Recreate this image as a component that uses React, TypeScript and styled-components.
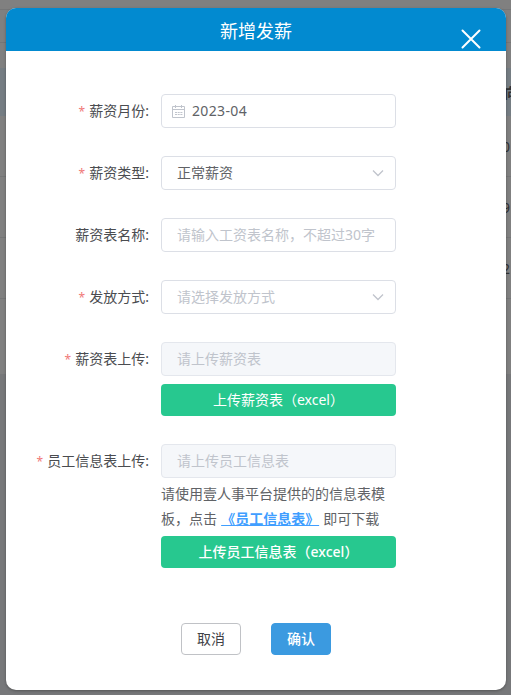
import React from 'react';
import styled, { createGlobalStyle, css } from 'styled-components';

const GlobalStyle = createGlobalStyle`
  * { box-sizing: border-box; }
  html, body { margin: 0; padding: 0; overflow: hidden; }
  body, button, input {
    font-family: "Noto Sans", "Noto Sans CJK SC", sans-serif;
    font-size: 14px;
  }
`;

const Page = styled.div`
  position: relative;
  width: 511px;
  height: 695px;
  overflow: hidden;
  background: #808080;
`;

const Backdrop = styled.div`
  display: flex;
  flex-direction: column;
  height: 100%;
`;

const BackRow = styled.div<{ $h: number; $tone?: string; $line?: boolean }>`
  display: flex;
  align-items: center;
  flex: none;
  height: ${p => p.$h}px;
  padding-left: 502px;
  overflow: hidden;
  white-space: nowrap;
  color: #303133;
  background: ${p => p.$tone || 'transparent'};
  border-bottom: ${p => (p.$line ? '1px solid #757677' : '0')};
`;

const HeadText = styled.b`
  margin-left: 2px;
  font-size: 14px;
`;

const Dialog = styled.section`
  position: absolute;
  left: 6px;
  top: 8px;
  width: 500px;
  height: 682px;
  display: flex;
  flex-direction: column;
  overflow: hidden;
  background: #fff;
  border-radius: 10px;
  box-shadow: 0 1px 3px rgba(0, 0, 0, 0.3);
`;

const Header = styled.header`
  position: relative;
  flex: none;
  display: flex;
  align-items: center;
  justify-content: center;
  height: 43px;
  padding-top: 2px;
  background: #028ad0;
  color: #fff;
  font-size: 18px;
  line-height: 24px;
`;

const Close = styled.button`
  position: absolute;
  right: 24px;
  top: 20px;
  display: flex;
  width: 22px;
  height: 22px;
  padding: 0;
  border: 0;
  background: none;
`;

const Form = styled.form`
  display: flex;
  flex-direction: column;
  gap: 28px;
  padding: 43px 110px 0 0;
`;

const Item = styled.div`
  display: grid;
  grid-template-columns: 143px 235px;
  column-gap: 12px;
`;

const Label = styled.label<{ $required?: boolean }>`
  height: 34px;
  line-height: 34px;
  text-align: right;
  white-space: nowrap;
  color: #4a4c50;
  ${p => p.$required && css`
    &::before {
      content: '*';
      margin-right: 4px;
      font-size: 12px;
      color: #f07878;
    }
  `}
`;

const Field = styled.div<{ $disabled?: boolean; $muted?: boolean; $icon?: boolean }>`
  display: flex;
  align-items: center;
  height: 34px;
  padding: 0 10px 0 ${p => (p.$icon ? 10 : 15)}px;
  border: 1px solid ${p => (p.$disabled ? '#e4e7ed' : '#dcdfe6')};
  border-radius: 4px;
  background: ${p => (p.$disabled ? '#f5f7fa' : '#fff')};
  color: ${p => (p.$muted ? '#c0c4cc' : '#606266')};
  white-space: nowrap;
  svg { flex: none; }
`;

const Value = styled.span<{ $date?: boolean }>`
  flex: 1;
  margin-left: ${p => (p.$date ? 7 : 0)}px;
  line-height: 20px;
  letter-spacing: ${p => (p.$date ? 0.35 : 0)}px;
`;

const Upload = styled.button<{ $top?: number; $strong?: boolean }>`
  display: block;
  width: 100%;
  height: 32px;
  margin-top: ${p => p.$top || 0}px;
  padding: 0;
  border: 0;
  border-radius: 4px;
  background: #27c88f;
  color: #fff;
  line-height: 32px;
  font-weight: ${p => (p.$strong ? 500 : 400)};
`;

const Hint = styled.p`
  margin: 3px 0 5px;
  width: 235px;
  line-height: 25px;
  color: #606266;
`;

const Link = styled.a`
  margin: 0 0.5px;
  color: #409eff;
  font-weight: 700;
  text-decoration: underline;
`;

const Footer = styled.footer`
  display: flex;
  justify-content: center;
  gap: 30px;
  margin-top: 55px;
`;

const Action = styled.button<{ $primary?: boolean }>`
  width: 60px;
  height: 32px;
  padding: 0;
  border: 1px solid ${p => (p.$primary ? '#3b9ae0' : '#c0c2c6')};
  border-radius: 4px;
  background: ${p => (p.$primary ? '#3b9ae0' : '#fff')};
  color: ${p => (p.$primary ? '#fff' : '#404246')};
  font-weight: ${p => (p.$primary ? 500 : 400)};
  line-height: 30px;
`;

const Calendar = () => (
  <svg width="13" height="13" viewBox="0 0 13 13" fill="none" stroke="#c0c4cc">
    <path d="M.5 1.5h12v11H.5zM.5 4.5h12M3.5 0v3M9.5 0v3" />
    <path d="M3 7.5h2M5.7 7.5h2M8.4 7.5h2M3 9.5h2M5.7 9.5h2M8.4 9.5h2" />
  </svg>
);

const Chevron = () => (
  <svg width="14" height="14" viewBox="0 0 14 14" fill="none" stroke="#c0c4cc" strokeWidth="1.3">
    <path d="M2 4.5l5 5 5-5" />
  </svg>
);

export default function App() {
  return (
    <>
      <GlobalStyle />
      <Page>
        <Backdrop>
          <BackRow $h={10} $line />
          <BackRow $h={33} $line />
          <BackRow $h={25} />
          <BackRow $h={48} $tone="#757d83"><HeadText>向</HeadText></BackRow>
          <BackRow $h={61} $line>0</BackRow>
          <BackRow $h={61} $line>9</BackRow>
          <BackRow $h={61} $line>2</BackRow>
          <BackRow $h={75} />
          <BackRow $h={321} $tone="#77787a" />
        </Backdrop>
        <Dialog role="dialog">
          <Header>
            新增发薪
            <Close aria-label="关闭">
              <svg width="22" height="22" viewBox="0 0 22 22" stroke="#fff" strokeWidth="2" strokeLinecap="round">
                <path d="M2.5 2.5l17 17M19.5 2.5l-17 17" />
              </svg>
            </Close>
          </Header>
          <Form>
            <Item>
              <Label $required>薪资月份:</Label>
              <Field $icon><Calendar /><Value $date>2023-04</Value></Field>
            </Item>
            <Item>
              <Label $required>薪资类型:</Label>
              <Field><Value>正常薪资</Value><Chevron /></Field>
            </Item>
            <Item>
              <Label>薪资表名称:</Label>
              <Field $muted><Value>请输入工资表名称，不超过30字</Value></Field>
            </Item>
            <Item>
              <Label $required>发放方式:</Label>
              <Field $muted><Value>请选择发放方式</Value><Chevron /></Field>
            </Item>
            <Item>
              <Label $required>薪资表上传:</Label>
              <div>
                <Field $muted $disabled><Value>请上传薪资表</Value></Field>
                <Upload type="button" $top={8}>上传薪资表（excel）</Upload>
              </div>
            </Item>
            <Item>
              <Label $required>员工信息表上传:</Label>
              <div>
                <Field $muted $disabled><Value>请上传员工信息表</Value></Field>
                <Hint>请使用壹人事平台提供的的信息表模板，点击 <Link>《员工信息表》</Link> 即可下载</Hint>
                <Upload type="button" $strong>上传员工信息表（excel）</Upload>
              </div>
            </Item>
          </Form>
          <Footer>
            <Action type="button">取消</Action>
            <Action type="button" $primary>确认</Action>
          </Footer>
        </Dialog>
      </Page>
    </>
  );
}
